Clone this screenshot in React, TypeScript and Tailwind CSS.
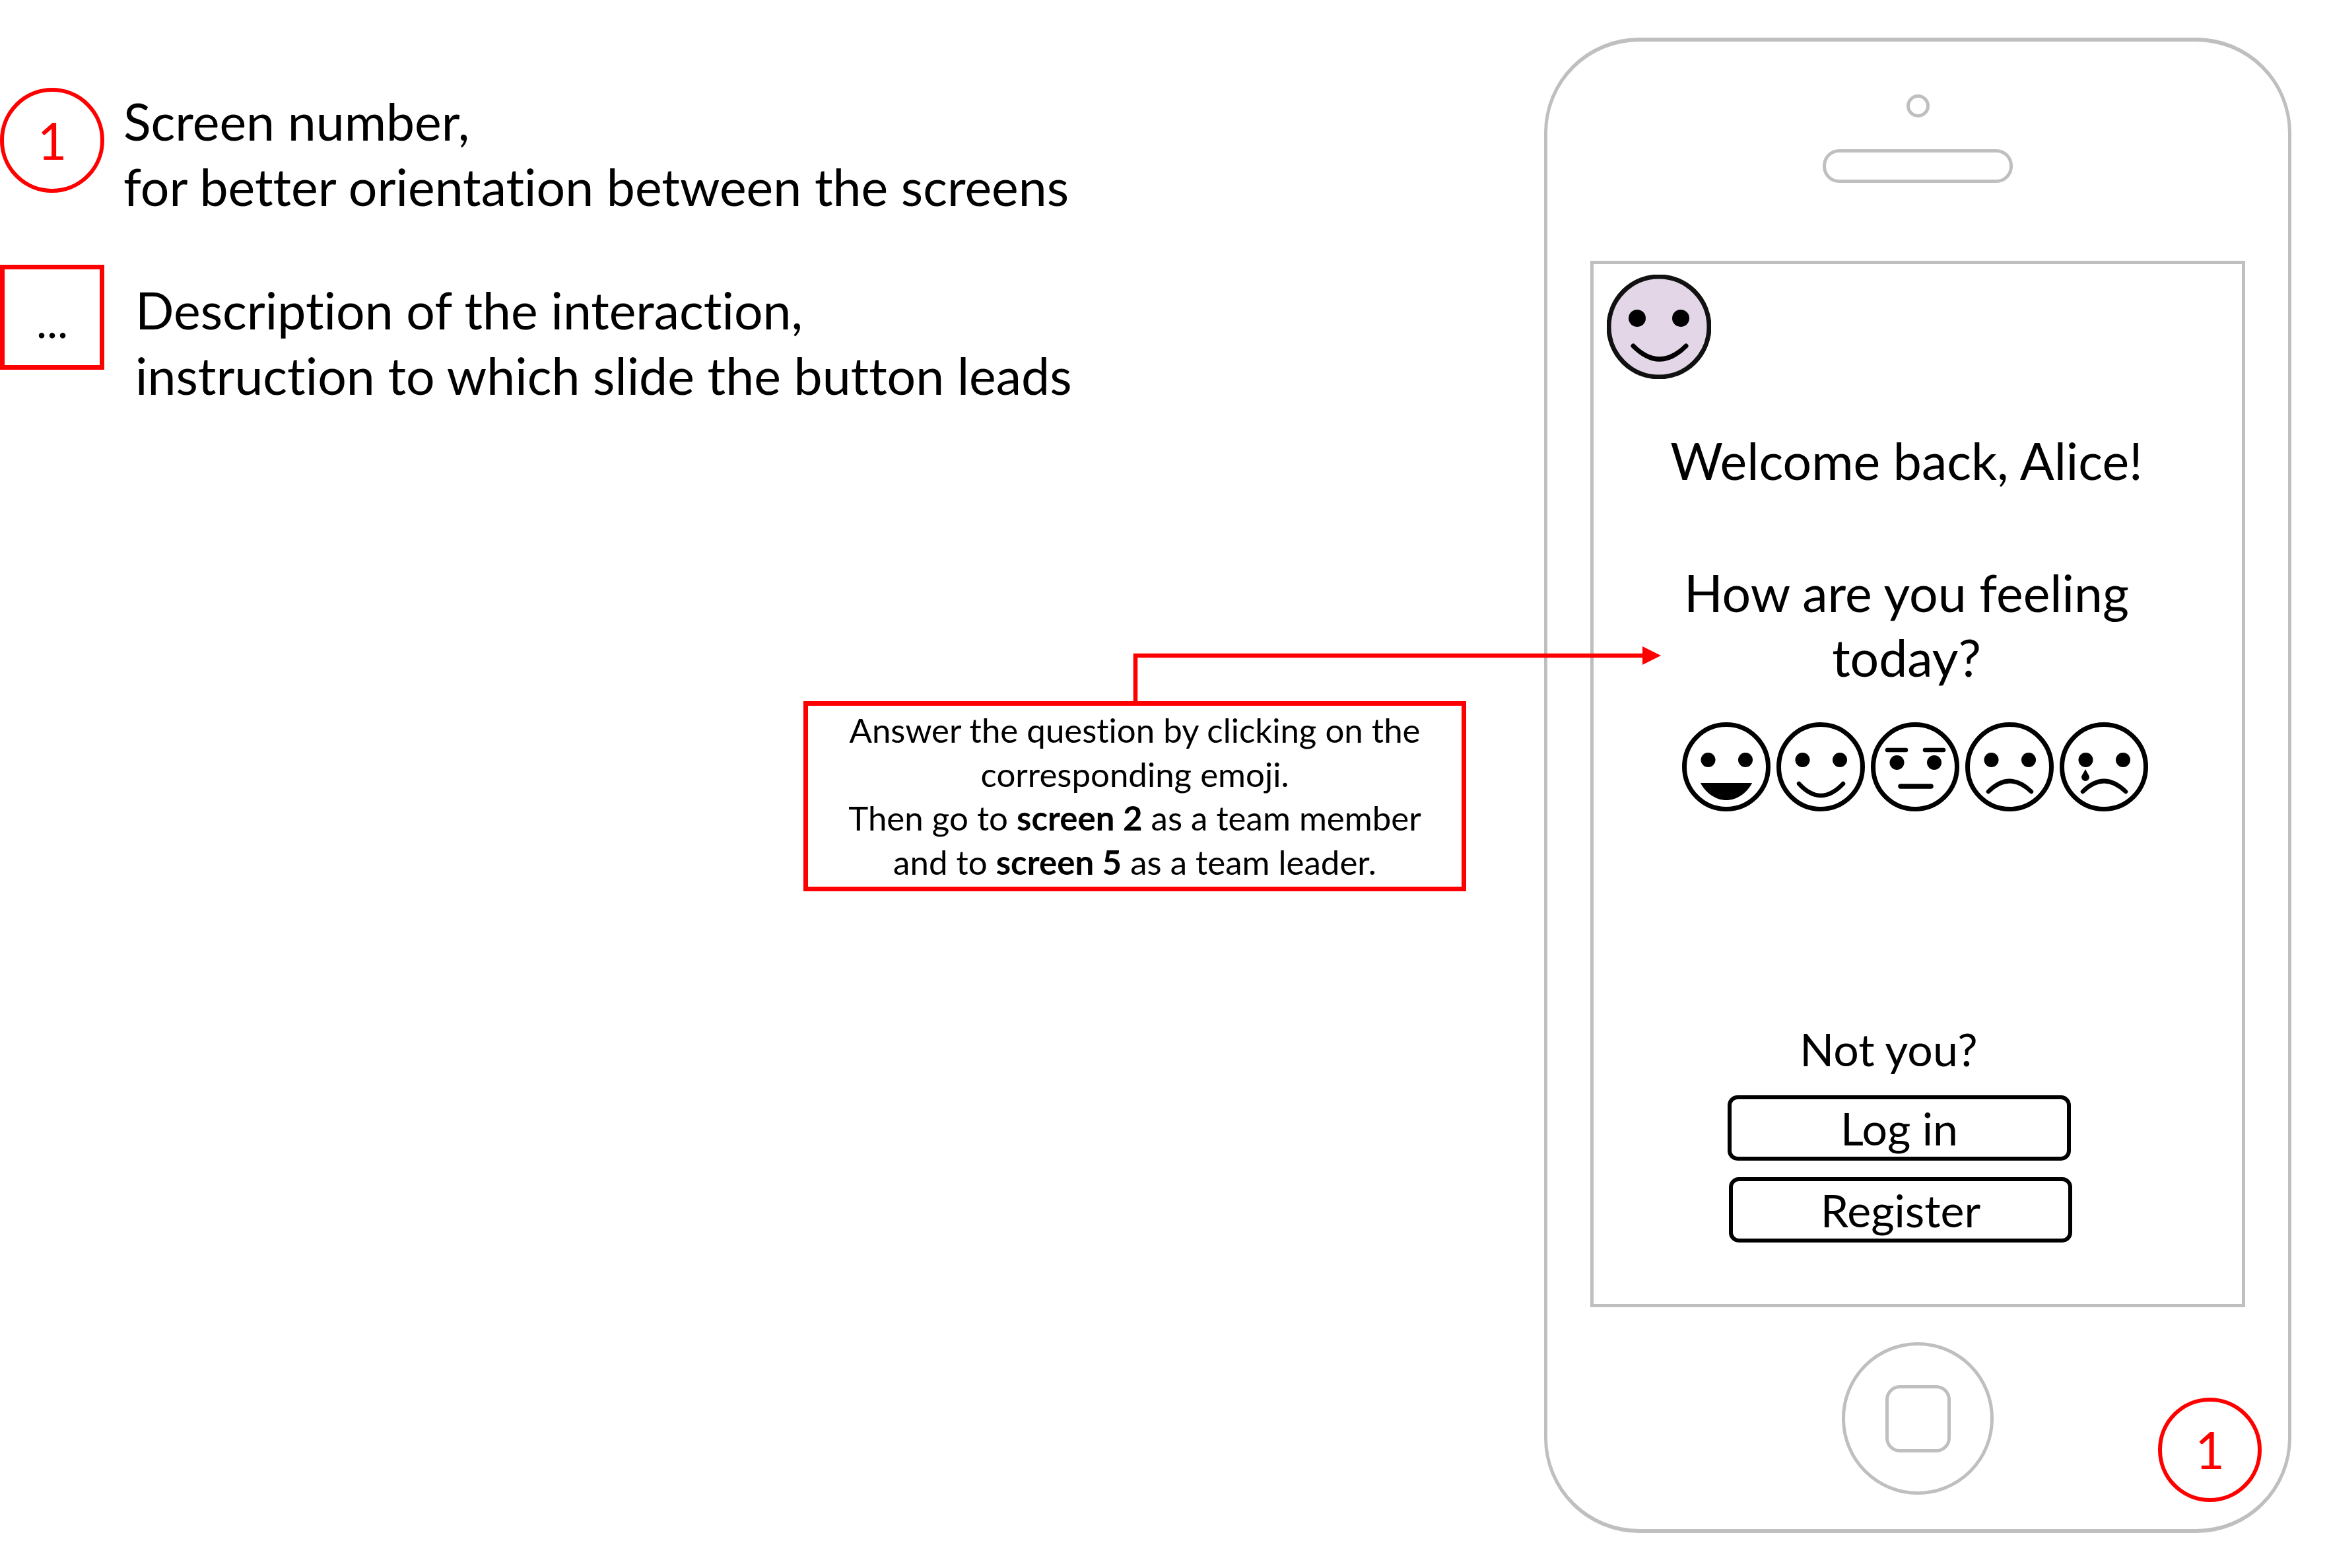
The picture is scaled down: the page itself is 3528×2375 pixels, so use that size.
const Eyes = ({ y = 57, r = 11 }: { y?: number; r?: number }) => (
  <>
    <ellipse cx="39.5" cy={y} rx={r} ry={r} fill="#000" />
    <ellipse cx="96" cy={y} rx={r} ry={r} fill="#000" />
  </>
);

const Frown = () => (
  <path d="M35 105 Q67 73 100 105" fill="none" stroke="#000" strokeWidth="6.5" strokeLinecap="round" />
);

const Emoji = ({ children }: { children: React.ReactNode }) => (
  <svg viewBox="0 0 134 135" className="w-[134px] h-[135px]">
    <ellipse cx="67" cy="67.5" rx="63.5" ry="64" fill="#fff" stroke="#000" strokeWidth="7" />
    {children}
  </svg>
);

const Button = ({ label, className }: { label: string; className: string }) => (
  <button className={`w-[520px] h-[99px] flex items-center justify-center border-[6px] border-black rounded-[15px] bg-white text-[68px] leading-none ${className}`}>
    {label}
  </button>
);

export default function App() {
  return (
    <div className="relative w-[3528px] h-[2375px] bg-white text-black flex justify-between items-start overflow-hidden [font-family:Lato,sans-serif] [font-variant-ligatures:none]">
      {/* legend */}
      <div className="flex flex-col pt-[133px] gap-[69px]">
        <div className="flex items-start">
          <div className="w-[158px] h-[159px] shrink-0 rounded-full border-[6px] border-[#ff0000] flex items-center justify-center text-[#ff0000] text-[77px]">
            1
          </div>
          <p className="ml-[29px] mt-[1px] text-[77px] leading-[99px]">
            Screen number,
            <br />
            for better orientation between the screens
          </p>
        </div>
        <div className="flex items-start">
          <div className="w-[158px] h-[159px] shrink-0 border-[7px] border-[#ff0000] flex items-center justify-center text-[68px] pt-[10px]">
            ...
          </div>
          <p className="ml-[47px] mt-[19px] text-[77px] leading-[99px]">
            Description of the interaction,
            <br />
            instruction to which slide the button leads
          </p>
        </div>
      </div>

      {/* phone */}
      <div className="relative w-[1132px] h-[2265px] mt-[57px] mr-[57px] rounded-[144px] border-x-[5px] border-y-[6px] border-[#bfbfbf] flex flex-col items-center pt-[80px]">
        <div className="w-[35px] h-[35px] rounded-full border-[5px] border-[#bfbfbf]" />
        <div className="w-[288px] h-[51px] mt-[48px] rounded-[25px] border-[5px] border-[#bfbfbf]" />

        <div className="w-[992px] h-[1585px] mt-[118px] border-[5px] border-[#bfbfbf] flex flex-col">
          <div className="ml-[20px] mt-[16px]">
            <svg viewBox="0 0 158 158" className="w-[158px] h-[158px]">
              <ellipse cx="79" cy="79" rx="76" ry="76" fill="#e2d6e7" stroke="#111" strokeWidth="7" />
              <circle cx="46" cy="66" r="13" fill="#000" />
              <circle cx="112" cy="66" r="13" fill="#000" />
              <path d="M40 108 Q80 148 120 108" fill="none" stroke="#000" strokeWidth="7" strokeLinecap="round" />
            </svg>
          </div>

          <div className="flex flex-col items-center mr-[34px] mt-[74px] text-[77px] leading-[98px] text-center">
            <p>Welcome back, Alice!</p>
            <p className="mt-[102px]">How are you feeling</p>
            <p>today?</p>
          </div>

          <div className="flex justify-center gap-[9px] mt-[50px] mr-[8px]">
            <Emoji>
              <Eyes />
              <path d="M28 92 H106 C98 108 82 118 67 118 C52 118 36 108 28 92 Z" fill="#000" />
            </Emoji>
            <Emoji>
              <Eyes />
              <path d="M34 93 Q67 129 101 93" fill="none" stroke="#000" strokeWidth="6.5" strokeLinecap="round" />
            </Emoji>
            <Emoji>
              <Eyes y={61} />
              <path d="M25 42 H53 M82 42 H110" stroke="#000" strokeWidth="6.5" strokeLinecap="round" />
              <path d="M45 97 H91" stroke="#000" strokeWidth="7.5" strokeLinecap="round" />
            </Emoji>
            <Emoji>
              <Eyes />
              <Frown />
            </Emoji>
            <Emoji>
              <Eyes />
              <path d="M39 71 C42 77 45 81 45 83 A6 6 0 0 1 33 83 C33 81 36 77 39 71 Z" fill="#000" />
              <Frown />
            </Emoji>
          </div>

          <p className="mt-[320px] mr-[88px] text-center text-[68px] leading-[80px]">Not you?</p>
          <div className="flex flex-col mt-[30px] ml-[203px] gap-[25px]">
            <Button label="Log in" className="" />
            <Button label="Register" className="ml-[2px]" />
          </div>
        </div>

        <div className="w-[230px] h-[231px] mt-[53px] rounded-full border-[5px] border-[#bfbfbf] flex items-center justify-center">
          <div className="w-[99px] h-[102px] rounded-[22px] border-[5px] border-[#bfbfbf]" />
        </div>

        {/* screen number badge */}
        <div className="absolute left-[925px] top-[2054px] w-[157px] h-[158px] rounded-full border-[6px] border-[#ff0000] bg-white flex items-center justify-center text-[#ff0000] text-[77px]">
          1
        </div>
      </div>

      {/* interaction note */}
      <div className="absolute left-[1217px] top-[1062px] w-[1004px] h-[288px] border-[7px] border-[#ff0000] bg-white flex items-center justify-center text-center text-[51px] leading-[66.5px]">
        <p>
          Answer the question by clicking on the
          <br />
          corresponding emoji.
          <br />
          Then go to <b>screen 2</b> as a team member
          <br />
          and to <b>screen 5</b> as a team leader.
        </p>
      </div>

      {/* connector arrow */}
      <svg className="absolute left-[1700px] top-[960px] w-[830px] h-[110px]" viewBox="0 0 830 110">
        <path d="M20 102 V33 H790" fill="none" stroke="#ff0000" strokeWidth="6.5" />
        <path d="M788 19 L816 33 L788 47 Z" fill="#ff0000" />
      </svg>
    </div>
  );
}
